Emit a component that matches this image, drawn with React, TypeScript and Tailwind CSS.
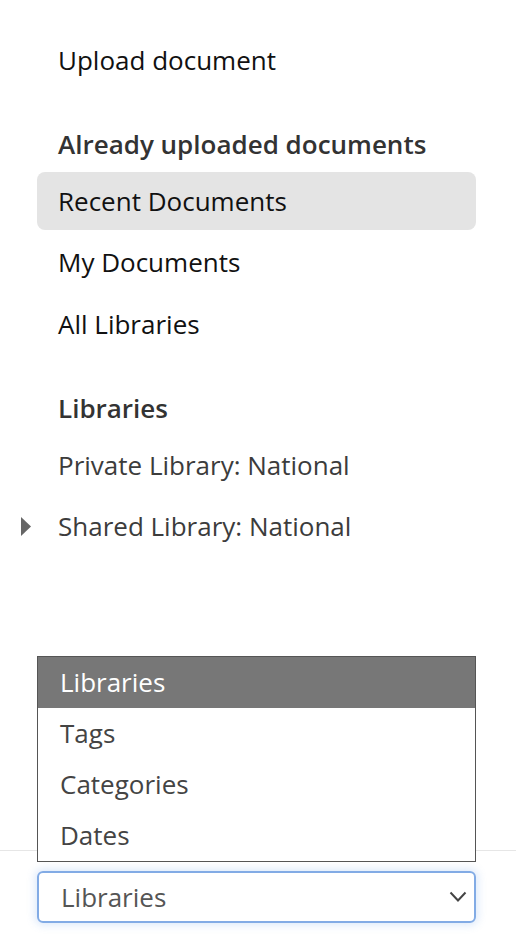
import React from "react";

const font = { fontFamily: '"Open Sans", "Noto Sans", sans-serif' };

function Row({
  children,
  active = false,
  muted = false,
  caret = false,
}: {
  children: React.ReactNode;
  active?: boolean;
  muted?: boolean;
  caret?: boolean;
}) {
  return (
    <div
      className={`flex h-[58px] items-center rounded-lg pl-[21px] text-[26px] ${
        active ? "bg-[#e4e4e4]" : ""
      } ${muted ? "text-[#3c3c3c]" : "text-[#111111]"}`}
    >
      {caret && (
        <svg
          className="ml-[-37px] mr-[27px] shrink-0"
          width="10"
          height="19"
          viewBox="0 0 10 19"
        >
          <polygon points="0,0 10,9.5 0,19" fill="#666666" />
        </svg>
      )}
      <span>{children}</span>
    </div>
  );
}

function Header({ children }: { children: React.ReactNode }) {
  return (
    <div className="flex h-[56px] items-center pl-[21px] text-[26px] font-semibold text-[#333333]">
      {children}
    </div>
  );
}

export default function App() {
  return (
    <div className="flex h-[934px] w-[516px] flex-col bg-white" style={font}>
      <nav className="flex flex-1 flex-col gap-[27px] pl-[37px] pr-[40px] pt-[31px]">
        <div className="flex flex-col">
          <Row>Upload document</Row>
        </div>
        <div className="flex flex-col">
          <Header>Already uploaded documents</Header>
          <div className="flex flex-col gap-[3.5px]">
            <Row active>Recent Documents</Row>
            <Row>My Documents</Row>
            <Row>All Libraries</Row>
          </div>
        </div>
        <div className="flex flex-col">
          <Header>Libraries</Header>
          <div className="flex flex-col gap-[3px]">
            <Row muted>Private Library: National</Row>
            <Row muted caret>
              Shared Library: National
            </Row>
          </div>
        </div>
      </nav>
      <div className="relative border-t-[1.5px] border-[#e6e6e6] pb-[11px] pl-[37px] pr-[40px] pt-[20px]">
        <div className="absolute bottom-[72px] left-[37px] w-[439px] border border-[#555555] bg-white text-[26px]">
          <div className="flex h-[51px] items-center bg-[#777777] pl-[22px] text-white">
            Libraries
          </div>
          <div className="flex h-[51px] items-center pl-[22px] text-[#444444]">Tags</div>
          <div className="flex h-[51px] items-center pl-[22px] text-[#444444]">Categories</div>
          <div className="flex h-[51px] items-center pl-[22px] text-[#444444]">Dates</div>
        </div>
        <div className="flex h-[52px] w-[439px] items-center justify-between rounded-md border-2 border-[#82abe5] pl-[22px] pr-[7px] text-[26px] text-[#555555] shadow-[0_0_8px_2px_rgba(90,150,230,0.22)]">
          <span>Libraries</span>
          <svg width="18" height="12" viewBox="0 0 18 12" className="shrink-0">
            <polyline
              points="1.5,1.5 9,9.5 16.5,1.5"
              fill="none"
              stroke="#444444"
              strokeWidth="2"
            />
          </svg>
        </div>
      </div>
    </div>
  );
}
